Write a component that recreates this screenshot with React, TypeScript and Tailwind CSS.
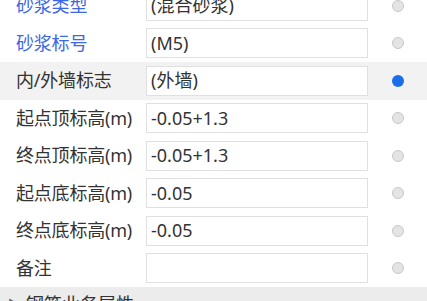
import React from "react";

type Row = { label: string; value: string; blue?: boolean; active?: boolean };

const rows: Row[] = [
  { label: "砂浆类型", value: "(混合砂浆)", blue: true },
  { label: "砂浆标号", value: "(M5)", blue: true },
  { label: "内/外墙标志", value: "(外墙)", active: true },
  { label: "起点顶标高(m)", value: "-0.05+1.3" },
  { label: "终点顶标高(m)", value: "-0.05+1.3" },
  { label: "起点底标高(m)", value: "-0.05" },
  { label: "终点底标高(m)", value: "-0.05" },
  { label: "备注", value: "" },
];

export default function App() {
  return (
    <div
      className="w-[427px] h-[301px] overflow-hidden bg-white text-[#333] text-[18px]"
      style={{ fontFamily: '"Noto Sans", "Noto Sans CJK SC", sans-serif' }}
    >
      <div className="-mt-[13px]">
        {rows.map((r, i) => (
          <div
            key={i}
            className={`flex items-center h-[37.5px] ${r.active ? "bg-[#f2f2f2]" : ""}`}
          >
            <div
              className={`w-[146px] pl-[16px] whitespace-nowrap tracking-[-0.2px] ${r.blue ? "text-[#3b68e6]" : "text-[#333]"}`}
            >
              {r.label}
            </div>
            <div className="w-[222px] h-[30px] border border-[#e0e0e0] bg-white flex items-center pl-[4px] whitespace-nowrap overflow-hidden">
              {r.value}
            </div>
            <div className="flex-1 flex justify-center">
              {r.active ? (
                <div className="w-[12px] h-[12px] rounded-full bg-[#1a6fe8]" />
              ) : (
                <div className="w-[12px] h-[12px] rounded-full bg-[#e4e4e4] border border-[#c8c8c8]" />
              )}
            </div>
          </div>
        ))}
      </div>
      <div className="h-[40px] bg-[#ececec] flex items-start pt-[4px] pl-[8px] gap-[8px]">
        <span className="text-[10px] text-[#666] mt-[5px]">▶</span>
        <span className="text-[#333]">钢筋业务属性</span>
      </div>
    </div>
  );
}
